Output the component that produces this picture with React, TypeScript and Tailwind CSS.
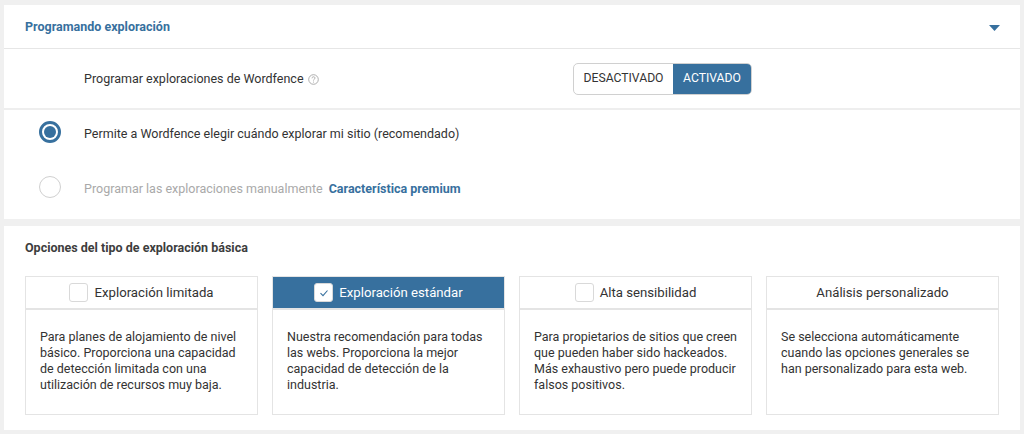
import React from "react";

const cards = [
  {
    title: "Exploración limitada",
    box: "empty",
    text: "Para planes de alojamiento de nivel básico. Proporciona una capacidad de detección limitada con una utilización de recursos muy baja.",
  },
  {
    title: "Exploración estándar",
    box: "checked",
    text: "Nuestra recomendación para todas las webs. Proporciona la mejor capacidad de detección de la industria.",
  },
  {
    title: "Alta sensibilidad",
    box: "empty",
    text: "Para propietarios de sitios que creen que pueden haber sido hackeados. Más exhaustivo pero puede producir falsos positivos.",
  },
  {
    title: "Análisis personalizado",
    box: "none",
    text: "Se selecciona automáticamente cuando las opciones generales se han personalizado para esta web.",
  },
];

function Card({ title, box, text }: { title: string; box: string; text: string }) {
  const active = box === "checked";
  return (
    <div className="flex h-[139px] flex-col border border-[#e4e4e4]">
      <div
        className={`flex h-[33px] items-center justify-center gap-[6px] border-b-2 border-[#e4e4e4] text-[13.2px] ${
          active ? "bg-[#37709e] text-white" : "text-[#333333]"
        }`}
      >
        {box !== "none" && (
          <span className="flex h-[19px] w-[19px] items-center justify-center rounded-[3px] border border-[#d9d9d9] bg-white">
            {active && (
              <svg width="10" height="10" viewBox="0 0 10 10" fill="none">
                <path d="M1.5 5.2 4 7.6 8.5 2.5" stroke="#37709e" strokeWidth="1.1" />
              </svg>
            )}
          </span>
        )}
        <span>{title}</span>
      </div>
      <p className="px-[14px] pt-[19px] text-[12.5px] leading-[16px] text-[#333333]">{text}</p>
    </div>
  );
}

export default function App() {
  return (
    <div className="flex h-[434px] w-[1024px] flex-col gap-[7px] overflow-hidden bg-[#f0f0f0] pl-[4px] pr-[4px] pt-[5px] font-['Roboto',sans-serif]">
      <section className="h-[214px] bg-white">
        <div className="flex h-[44px] items-center justify-between border-b border-[#e6e6e6] pl-[21px] pr-[20px]">
          <h2 className="mt-[1px] text-[12.5px] font-bold text-[#37709e]">Programando exploración</h2>
          <svg width="11" height="6" viewBox="0 0 11 6" className="mt-[3px]">
            <path d="M0 0h11L5.5 6z" fill="#37709e" />
          </svg>
        </div>
        <div className="flex h-[61px] items-center border-b-2 border-[#eeeeee] pl-[80px]">
          <div className="mt-[1px] flex w-[489px] items-center gap-[4px] text-[12.5px] text-[#333333]">
            Programar exploraciones de Wordfence
            <svg width="11" height="11" viewBox="0 0 11 11" fill="none">
              <circle cx="5.5" cy="5.5" r="4.8" stroke="#9a9a9a" strokeWidth="0.8" />
              <path d="M4 4.3c0-2 3-2 3-.2 0 1.1-1.5 1-1.5 2.4" stroke="#9a9a9a" strokeWidth="0.8" />
              <circle cx="5.5" cy="8" r="0.5" fill="#9a9a9a" />
            </svg>
          </div>
          <div className="flex h-[32px] overflow-hidden rounded-[5px] border border-[#d0d0d0] text-[12.2px]">
            <span className="flex w-[99px] items-center justify-center text-[#333333]">DESACTIVADO</span>
            <span className="flex w-[78px] items-center justify-center bg-[#37709e] text-white">ACTIVADO</span>
          </div>
        </div>
        <div className="flex items-center gap-[23px] pl-[35px] pt-[11px] text-[12.5px] text-[#333333]">
          <span className="flex h-[22px] w-[22px] items-center justify-center rounded-full border-[3px] border-[#37709e]">
            <span className="h-[12px] w-[12px] rounded-full bg-[#37709e]" />
          </span>
          <span className="mt-[4px]">Permite a Wordfence elegir cuándo explorar mi sitio (recomendado)</span>
        </div>
        <div className="flex items-center pl-[35px] pt-[32px] text-[12.5px]">
          <span className="mr-[23px] h-[22px] w-[22px] rounded-full border border-[#d0d0d0]" />
          <span className="mr-[6px] mt-[4px] text-[#a9a9a9]">Programar las exploraciones manualmente</span>
          <span className="mt-[4px] font-bold text-[#37709e]">Característica premium</span>
        </div>
      </section>
      <section className="h-[204px] bg-white pl-[21px] pr-[21px] pt-[14px]">
        <h3 className="text-[12.5px] leading-[16px] font-bold text-[#3d3d3d]">Opciones del tipo de exploración básica</h3>
        <div className="mt-[20px] grid grid-cols-4 gap-[14px]">
          {cards.map((c) => (
            <Card key={c.title} {...c} />
          ))}
        </div>
      </section>
    </div>
  );
}
